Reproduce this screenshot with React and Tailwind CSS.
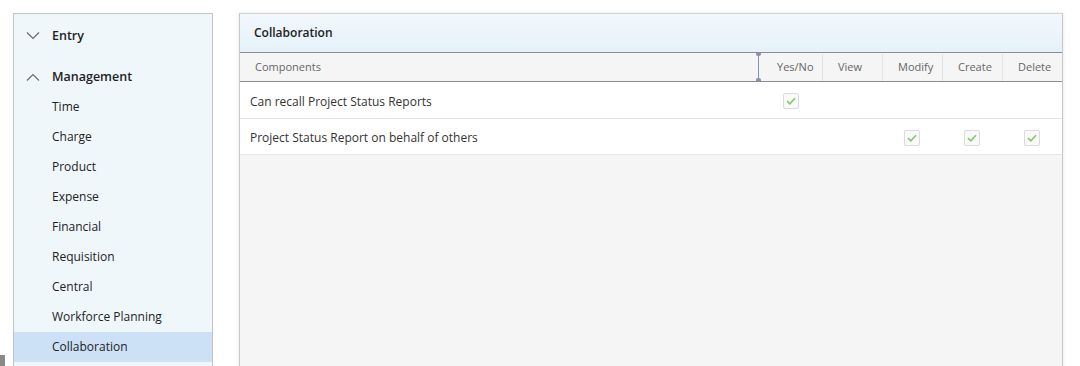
import React from "react";

const MENU = [
  "Time",
  "Charge",
  "Product",
  "Expense",
  "Financial",
  "Requisition",
  "Central",
  "Workforce Planning",
  "Collaboration",
];

const COLS = ["Yes/No", "View", "Modify", "Create", "Delete"];

const ROWS = [
  { name: "Can recall Project Status Reports", checks: [true, false, false, false, false] },
  { name: "Project Status Report on behalf of others", checks: [false, false, true, true, true] },
];

const Chevron = ({ up }) => (
  <svg width="14" height="8" viewBox="0 0 14 8" className="shrink-0">
    <path
      d={up ? "M1 7.5 L7 1.5 L13 7.5" : "M1 0.5 L7 6.5 L13 0.5"}
      fill="none"
      stroke="#6b6b6b"
      strokeWidth="1.2"
    />
  </svg>
);

const Check = () => (
  <div className="w-[16px] h-[16px] border border-[#dcdcdc] rounded-[2px] bg-[#f9f9f9] flex items-center justify-center">
    <svg width="10" height="8" viewBox="0 0 10 8">
      <path d="M1 4.2 L3.8 6.8 L9 1.2" fill="none" stroke="#8cc46c" strokeWidth="1.6" />
    </svg>
  </div>
);

const App = () => {
  return (
    <div
      className="relative h-[366px] overflow-hidden bg-white flex pt-[13px] pl-[13px] text-[12px]"
      style={{ fontFamily: '"Open Sans", "Liberation Sans", sans-serif' }}
    >
      {/* Sidebar */}
      <div className="w-[200px] shrink-0 h-[380px] border border-[#c4c4c4] bg-[#f0f7fb] text-[#222] pt-[1px]">
        <div className="h-[42px] flex items-center pl-[12px] gap-[12px] font-semibold text-[12.5px]">
          <Chevron />
          <span>Entry</span>
        </div>
        <div className="h-[35px] flex items-center pl-[12px] gap-[12px] font-semibold text-[12.5px] pt-[5px]">
          <Chevron up />
          <span>Management</span>
        </div>
        {MENU.map((m) => (
          <div
            key={m}
            className={`h-[30px] flex items-center pl-[38px] ${m === "Collaboration" ? "bg-[#cce1f6]" : ""}`}
          >
            {m}
          </div>
        ))}
      </div>

      {/* Main panel */}
      <div className="ml-[26px] w-[824px] shrink-0 h-[380px] flex flex-col border border-[#c8c8c8] border-t-[#d4d4d4] bg-[#f5f5f5] shadow-[0_0_3px_rgba(0,0,0,0.12)]">
        <div className="h-[39px] shrink-0 flex items-center pl-[14px] font-semibold text-[#222] bg-gradient-to-b from-[#f2f8fc] to-[#e5f1f9] border-b border-[#8c8c8c]">
          Collaboration
        </div>
        <div className="h-[29px] shrink-0 flex bg-[#f5f5f5] border-b border-[#8c8c8c] text-[#666] text-[11px] pt-[1px]">
          <div className="flex-1 flex items-center pl-[15px] relative">
            Components
            <div className="absolute right-0 top-[-1px] bottom-0 w-[1px] bg-[#8a8fb4]" />
            <div className="absolute right-[-2px] top-[-1px] w-[5px] h-[3px] bg-[#8a8fb4] rounded-b-[2px]" />
            <div className="absolute right-[-2px] bottom-0 w-[5px] h-[3px] bg-[#8a8fb4] rounded-t-[2px]" />
          </div>
          {COLS.map((c, i) => (
            <div
              key={c}
              className={`${i === 0 ? "w-[63px] pl-[18px]" : "w-[60px] border-l border-[#e2e2e2] pl-[15px]"} flex items-center`}
            >
              {c}
            </div>
          ))}
        </div>
        {ROWS.map((r, ri) => (
          <div
            key={r.name}
            className={`${ri === 0 ? "h-[37px]" : "h-[36px]"} shrink-0 flex bg-white border-b border-[#e4e4e4] text-[#333]`}
          >
            <div className="flex-1 flex items-center pl-[10px] pt-[3px]">{r.name}</div>
            {r.checks.map((c, i) => (
              <div
                key={i}
                className={`${i === 0 ? "w-[63px]" : "w-[60px]"} flex items-center justify-center pt-[2px]`}
              >
                {c && <Check />}
              </div>
            ))}
          </div>
        ))}
        <div className="flex-1 bg-[#f5f5f5]" />
      </div>

      {/* small splitter grip */}
      <div className="absolute left-0 top-[355px] w-[5px] h-[11px] bg-[#8a8a8a]" />
    </div>
  );
};

export default App;
